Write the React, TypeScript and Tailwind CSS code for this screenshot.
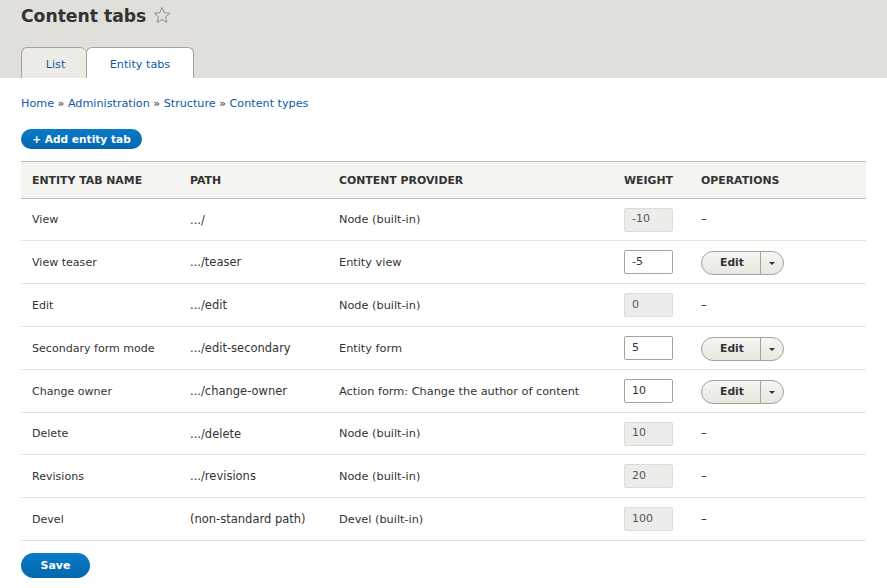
const ROWS = [
  { name: "View", path: ".../", provider: "Node (built-in)", weight: "-10", editable: false, height: "h-[42px]" },
  { name: "View teaser", path: ".../teaser", provider: "Entity view", weight: "-5", editable: true, height: "h-[43px]" },
  { name: "Edit", path: ".../edit", provider: "Node (built-in)", weight: "0", editable: false, height: "h-[43px]" },
  { name: "Secondary form mode", path: ".../edit-secondary", provider: "Entity form", weight: "5", editable: true, height: "h-[43px]" },
  { name: "Change owner", path: ".../change-owner", provider: "Action form: Change the author of content", weight: "10", editable: true, height: "h-[43px]" },
  { name: "Delete", path: ".../delete", provider: "Node (built-in)", weight: "10", editable: false, height: "h-[42px]" },
  { name: "Revisions", path: ".../revisions", provider: "Node (built-in)", weight: "20", editable: false, height: "h-[43px]" },
  { name: "Devel", path: "(non-standard path)", provider: "Devel (built-in)", weight: "100", editable: false, height: "h-[43px]" },
]

function EditButton() {
  return (
    <div className="mt-[1px] flex h-[24px] w-[83px] rounded-full border border-[#a6a29a] bg-gradient-to-b from-[#f6f6f3] to-[#e7e7df] text-[10.8px] font-bold text-[#333]">
      <span className="flex w-[59px] items-center justify-center border-r border-[#a6a29a] pt-[1px] pl-[2px]">Edit</span>
      <span className="flex flex-1 items-center justify-center pr-[1px]">
        <span className="h-0 w-0 border-x-[3px] border-t-[3px] border-x-transparent border-t-[#333]" />
      </span>
    </div>
  )
}

export default function App() {
  return (
    <div className="h-[588px] w-[887px] overflow-hidden bg-white font-['DejaVu_Sans',sans-serif] text-[#333]">
      <div className="h-[78px] bg-[#e0dfd9] px-[21px]">
        <div className="flex h-[47px] items-start gap-[7px]">
          <h1 className="pt-px text-[17.2px] leading-[30px] font-bold text-[#333]">Content tabs</h1>
          <svg className="mt-[6px]" width="18" height="18" viewBox="0 0 18 18" fill="none" stroke="#8e8d85" strokeWidth="1">
            <path d="M9 1.5l2.2 5.2 5.6.5-4.3 3.7 1.3 5.500L9 13.500l-4.800 2.900 1.300-5.500L1.200 7.200l5.600-.5z" />
          </svg>
        </div>
        <div className="flex h-[31px] text-[11.2px] text-[#0c5bab]">
          <div className="flex w-[65px] justify-center rounded-t-[6px] border border-r-0 border-b-0 border-[#a6a29a] bg-[#ecebe6] pt-[9px] pl-[3px]">List</div>
          <div className="flex w-[108px] justify-center rounded-t-[6px] border border-b-0 border-[#a6a29a] bg-white pt-[9px]">Entity tabs</div>
        </div>
      </div>

      <div className="px-[21px]">
        <nav className="flex h-[50px] items-center gap-[3px] pt-[2px] text-[11.2px] text-[#0c5bab]">
          <span>Home</span>
          <span className="px-[0.5px] text-[#333]">»</span>
          <span>Administration</span>
          <span className="px-[0.5px] text-[#333]">»</span>
          <span>Structure</span>
          <span className="px-[0.5px] text-[#333]">»</span>
          <span>Content types</span>
        </nav>

        <div className="mt-[1px] flex h-[20px] w-[121px] items-center justify-center rounded-full bg-gradient-to-b from-[#0a7bc8] to-[#0467ad] pt-[2px] text-[10.6px] font-bold text-white">
          + Add entity tab
        </div>

        <table className="mt-[12px] w-[845px] table-fixed border-collapse">
          <thead>
            <tr className="h-[37px] border-y border-[#bfbfba] bg-[#f4f4f1] text-left text-[10.9px] text-[#333]">
              <th className="w-[158px] pt-[2px] pl-[11px] font-bold">ENTITY TAB NAME</th>
              <th className="w-[149px] pt-[2px] pl-[11px] font-bold">PATH</th>
              <th className="w-[285px] pt-[2px] pl-[11px] font-bold">CONTENT PROVIDER</th>
              <th className="w-[77px] pt-[2px] pl-[11px] font-bold">WEIGHT</th>
              <th className="pt-[2px] pl-[11px] font-bold">OPERATIONS</th>
            </tr>
          </thead>
          <tbody>
            {ROWS.map((row) => (
              <tr key={row.name} className={`${row.height} border-b border-[#e6e4df]`}>
                <td className="pt-[2px] pl-[11px] text-[11.05px]">{row.name}</td>
                <td className="pt-[2px] pl-[11px] text-[11.5px]">{row.path}</td>
                <td className="pt-[2px] pl-[11px] text-[11.3px]">{row.provider}</td>
                <td className="pl-[11px] text-[11px]">
                  <div
                    className={
                      row.editable
                        ? "flex h-[24px] w-[49px] items-center rounded-[2px] border border-[#a6a29a] bg-white pl-[7px]"
                        : "flex h-[24px] w-[49px] items-center rounded-[2px] border border-[#dcdcd8] bg-[#ececea] pl-[7px] text-[#555]"
                    }
                  >
                    {row.weight}
                  </div>
                </td>
                <td className="pt-[1px] pl-[11px] text-[11.5px]">{row.editable ? <EditButton /> : "–"}</td>
              </tr>
            ))}
          </tbody>
        </table>

        <div className="mt-[12px] flex h-[25px] w-[69px] items-center justify-center rounded-full bg-gradient-to-b from-[#0a7bc8] to-[#0467ad] pt-[2px] text-[11px] font-bold text-white">
          Save
        </div>
      </div>
    </div>
  )
}
